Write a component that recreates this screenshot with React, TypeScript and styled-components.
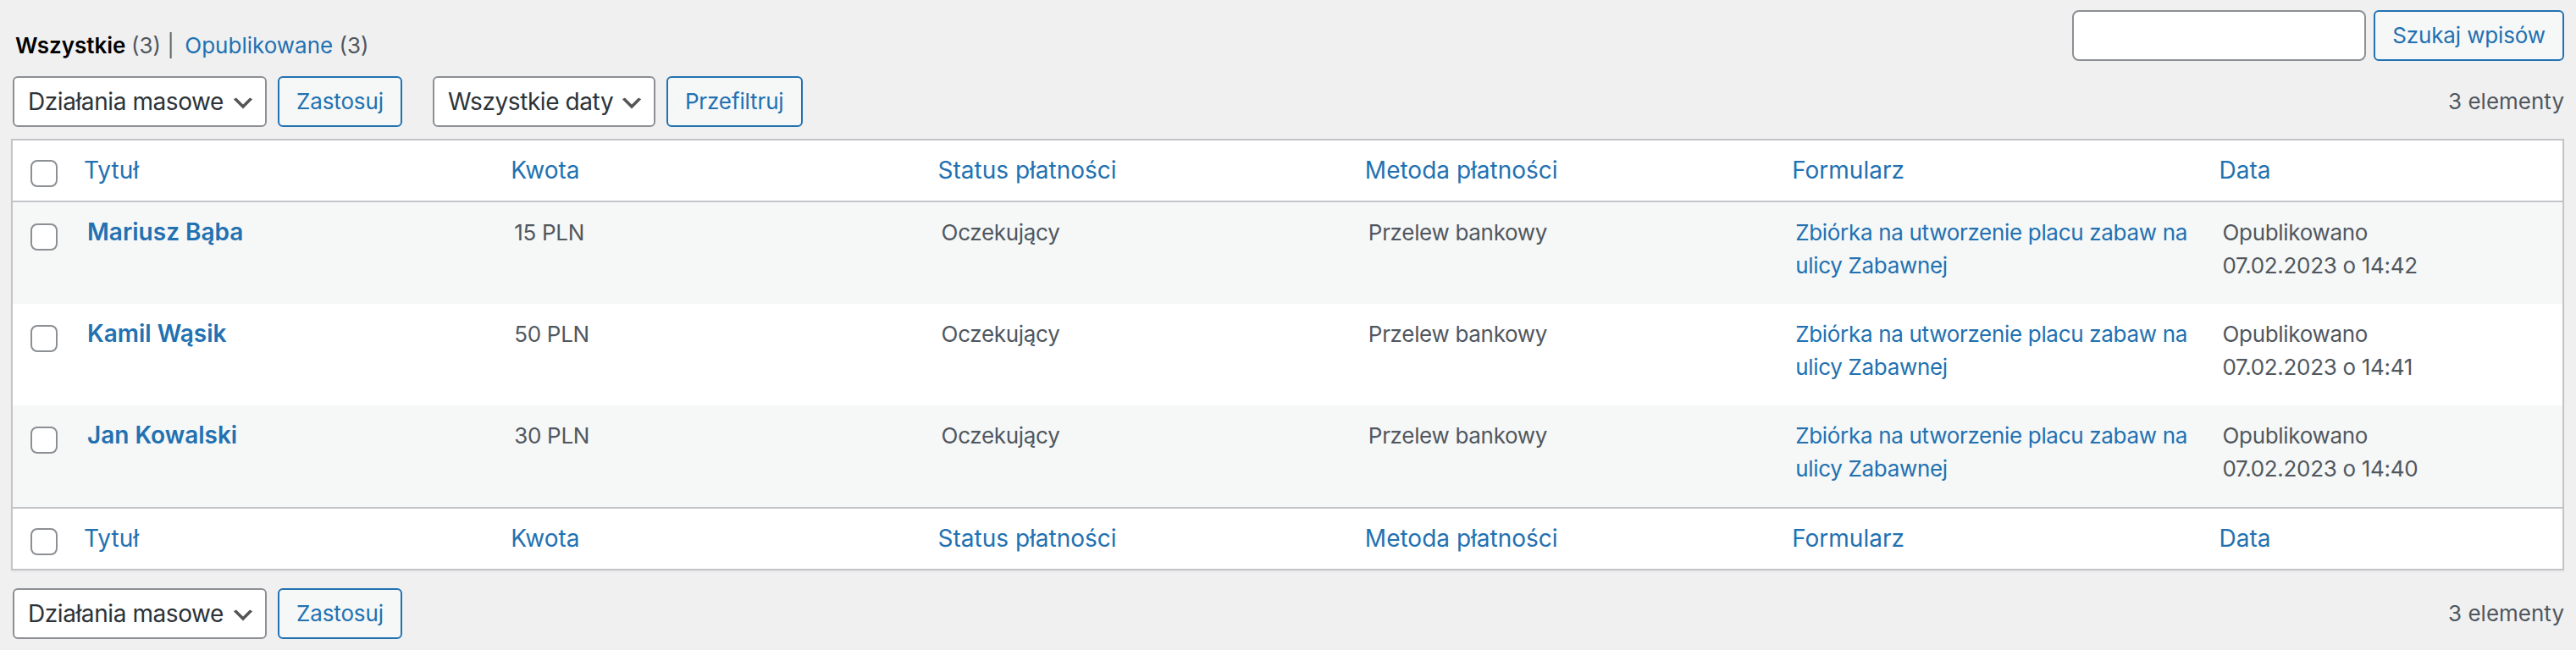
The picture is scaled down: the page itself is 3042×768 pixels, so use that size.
import React from "react";
import styled, { createGlobalStyle } from "styled-components";

////////////////////////////////////////////////////////////////////////////////
// Types
////////////////////////////////////////////////////////////////////////////////
type Donation = {
  id: number;
  name: string;
  amount: string;
  status: string;
  method: string;
  form: string;
  date: string;
};

type Section = "head" | "body" | "foot";

////////////////////////////////////////////////////////////////////////////////
// Data
////////////////////////////////////////////////////////////////////////////////
const FORM_NAME = "Zbiórka na utworzenie placu zabaw na ulicy Zabawnej";

const donations: Donation[] = [
  { id: 3, name: "Mariusz Bąba", amount: "15 PLN", status: "Oczekujący", method: "Przelew bankowy", form: FORM_NAME, date: "07.02.2023 o 14:42" },
  { id: 2, name: "Kamil Wąsik", amount: "50 PLN", status: "Oczekujący", method: "Przelew bankowy", form: FORM_NAME, date: "07.02.2023 o 14:41" },
  { id: 1, name: "Jan Kowalski", amount: "30 PLN", status: "Oczekujący", method: "Przelew bankowy", form: FORM_NAME, date: "07.02.2023 o 14:40" },
];

const columns = ["Tytuł", "Kwota", "Status płatności", "Metoda płatności", "Formularz", "Data"];

////////////////////////////////////////////////////////////////////////////////
// Styles
////////////////////////////////////////////////////////////////////////////////
const GlobalStyle = createGlobalStyle`
  html, body {
    margin: 0;
    padding: 0;
    background: #f0f0f1;
  }
  body {
    font-family: Inter, "Noto Sans", "Liberation Sans", sans-serif;
    font-size: 26px;
    color: #3c434a;
    -webkit-font-smoothing: antialiased;
  }
  *, *::before, *::after {
    box-sizing: border-box;
  }
`;

const Wrap = styled.div`
  padding: 0 14px 0 13px;
`;

const TopBar = styled.div`
  display: flex;
  justify-content: space-between;
  align-items: flex-start;
  height: 80px;
`;

const StatusLinks = styled.ul`
  margin: 28px 0 0;
  padding: 0 0 0 5px;
  list-style: none;
  line-height: 52px;
  color: #646970;
  white-space: pre;
`;

const StatusItem = styled.li`
  display: inline;

  & + & {
    margin-left: 5px;
  }
`;

const StatusLink = styled.a<{ $current?: boolean }>`
  color: ${(p) => (p.$current ? "#000" : "#2271b1")};
  font-weight: ${(p) => (p.$current ? 600 : 400)};
  text-decoration: none;
`;

const Count = styled.span`
  color: #50575e;
  font-weight: 400;
`;

const SearchBox = styled.p`
  display: flex;
  gap: 9px;
  margin: 12px 0 0;
`;

const SearchInput = styled.input`
  width: 347px;
  height: 60px;
  padding: 0 16px;
  border: 2px solid #8c8f94;
  border-radius: 8px;
  background: #fff;
  font-family: inherit;
  font-size: 28px;
  color: #2c3338;
`;

const Button = styled.button`
  height: 60px;
  padding: 0 20px;
  border: 2px solid #2271b1;
  border-radius: 6px;
  background: #f6f7f7;
  color: #2271b1;
  font-family: inherit;
  font-size: 26px;
  line-height: 56px;
  letter-spacing: -0.005em;
  white-space: nowrap;
  cursor: pointer;
`;

const Tablenav = styled.div<{ $position: "top" | "bottom" }>`
  display: flex;
  align-items: center;
  gap: 34px;
  height: 60px;
  margin: ${(p) => (p.$position === "top" ? "10px 0 14px" : "21px 0 0")};
`;

const Actions = styled.div`
  display: flex;
  align-items: center;
  gap: 11px;
`;

const SelectBox = styled.div<{ $width: number }>`
  display: flex;
  align-items: center;
  justify-content: space-between;
  width: ${(p) => p.$width}px;
  height: 60px;
  margin: 0 2px;
  padding: 0 10px 0 16px;
  border: 2px solid #8c8f94;
  border-radius: 6px;
  background: #fff;
  color: #2c3338;
  font-size: 28px;
  letter-spacing: -0.015em;
  white-space: nowrap;
  cursor: pointer;
`;

const Chevron = styled.svg`
  flex: none;
  width: 32px;
  height: 32px;
  margin-top: 3px;
`;

const DisplayingNum = styled.span`
  margin-left: auto;
  color: #50575e;
  font-size: 26px;
  line-height: 60px;
`;

const Table = styled.table`
  width: 100%;
  table-layout: fixed;
  border-collapse: separate;
  border-spacing: 0;
  background: #fff;
  border: 2px solid #c3c4c7;
  box-shadow: 0 2px 2px rgba(0, 0, 0, 0.04);
`;

const Col = styled.col<{ $width?: string }>`
  width: ${(p) => p.$width ?? "auto"};
`;

const HeadCell = styled.th<{ $section: Section }>`
  padding: 0;
  text-align: left;
  font-weight: 400;
  font-size: 28px;
  line-height: 1.4em;
  border-bottom: ${(p) => (p.$section === "head" ? "2px solid #c3c4c7" : "0")};
  border-top: ${(p) => (p.$section === "foot" ? "2px solid #c3c4c7" : "0")};
`;

const SortLink = styled.a`
  display: block;
  overflow: hidden;
  padding: 16px;
  color: #2271b1;
  text-decoration: none;
  white-space: nowrap;
`;

const CheckCell = styled.td<{ $section: Section }>`
  padding: ${(p) => (p.$section === "body" ? "25px 0 0 6px" : "23px 0 0 6px")};
  vertical-align: top;
  border-bottom: ${(p) => (p.$section === "head" ? "2px solid #c3c4c7" : "0")};
  border-top: ${(p) => (p.$section === "foot" ? "2px solid #c3c4c7" : "0")};
`;

const Checkbox = styled.input.attrs({ type: "checkbox" })`
  appearance: none;
  display: block;
  width: 32px;
  height: 32px;
  margin: 0 0 0 15px;
  border: 2px solid #8c8f94;
  border-radius: 8px;
  background: #fff;
  cursor: pointer;
`;

const Row = styled.tr<{ $alt: boolean }>`
  height: 120px;
  background: ${(p) => (p.$alt ? "#f6f7f7" : "transparent")};
`;

const Cell = styled.td`
  padding: 16px 20px;
  vertical-align: top;
  font-size: 26px;
  line-height: 39px;
  letter-spacing: -0.012em;
  color: #50575e;
`;

const TitleLink = styled.a`
  display: block;
  font-size: 28px;
  font-weight: 600;
  letter-spacing: 0;
  color: #2271b1;
  text-decoration: none;
`;

const FormLink = styled.a`
  color: #2271b1;
  text-decoration: none;
`;

////////////////////////////////////////////////////////////////////////////////
// Components
////////////////////////////////////////////////////////////////////////////////
const Select: React.FC<{ label: string; width: number }> = ({ label, width }) => (
  <SelectBox $width={width}>
    <span>{label}</span>
    <Chevron viewBox="0 0 20 20">
      <path d="M5 6l5 5 5-5 2 1-7 7-7-7 2-1z" fill="#555" />
    </Chevron>
  </SelectBox>
);

const HeaderRow: React.FC<{ section: Section }> = ({ section }) => (
  <tr>
    <CheckCell $section={section}>
      <Checkbox aria-label="Zaznacz wszystko" />
    </CheckCell>
    {columns.map((col) => (
      <HeadCell key={col} scope="col" $section={section}>
        <SortLink href="#">{col}</SortLink>
      </HeadCell>
    ))}
  </tr>
);

const Tablenavigation: React.FC<{ position: "top" | "bottom" }> = ({ position }) => (
  <Tablenav $position={position}>
    <Actions>
      <Select label="Działania masowe" width={300} />
      <Button>Zastosuj</Button>
    </Actions>
    {position === "top" && (
      <Actions>
        <Select label="Wszystkie daty" width={263} />
        <Button>Przefiltruj</Button>
      </Actions>
    )}
    <DisplayingNum>3 elementy</DisplayingNum>
  </Tablenav>
);

////////////////////////////////////////////////////////////////////////////////
// Export
////////////////////////////////////////////////////////////////////////////////
const App: React.FC = () => {
  return (
    <>
      <GlobalStyle />
      <Wrap>
        <TopBar>
          <StatusLinks>
            <StatusItem>
              <StatusLink href="#" $current>
                {"Wszystkie "}
                <Count>(3)</Count>
              </StatusLink>
              {" |"}
            </StatusItem>
            <StatusItem>
              {" "}
              <StatusLink href="#">Opublikowane</StatusLink>
              {" "}
              <Count>(3)</Count>
            </StatusItem>
          </StatusLinks>
          <SearchBox>
            <SearchInput type="search" aria-label="Szukaj wpisów" />
            <Button>Szukaj wpisów</Button>
          </SearchBox>
        </TopBar>

        <Tablenavigation position="top" />

        <Table>
          <colgroup>
            <Col $width="68px" />
            <Col />
            <Col />
            <Col />
            <Col />
            <Col />
            <Col $width="14%" />
          </colgroup>
          <thead>
            <HeaderRow section="head" />
          </thead>
          <tbody>
            {donations.map((d, i) => (
              <Row key={d.id} $alt={i % 2 === 0}>
                <CheckCell $section="body">
                  <Checkbox aria-label={`Zaznacz ${d.name}`} />
                </CheckCell>
                <Cell>
                  <strong>
                    <TitleLink href="#">{d.name}</TitleLink>
                  </strong>
                </Cell>
                <Cell>{d.amount}</Cell>
                <Cell>{d.status}</Cell>
                <Cell>{d.method}</Cell>
                <Cell>
                  <FormLink href="#">{d.form}</FormLink>
                </Cell>
                <Cell>
                  Opublikowano
                  <br />
                  {d.date}
                </Cell>
              </Row>
            ))}
          </tbody>
          <tfoot>
            <HeaderRow section="foot" />
          </tfoot>
        </Table>

        <Tablenavigation position="bottom" />
      </Wrap>
    </>
  );
};

export default App;
